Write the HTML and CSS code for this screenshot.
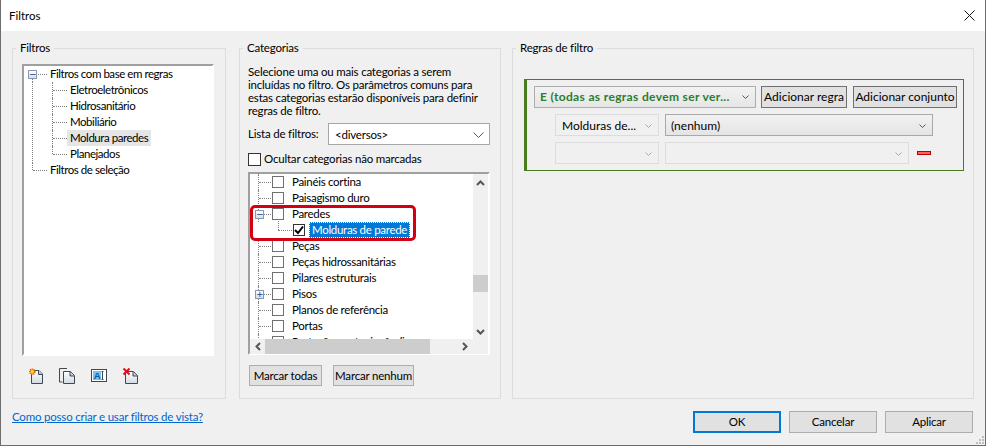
FILE: index.html
```html
<!DOCTYPE html>
<html lang="pt">
<head>
<meta charset="utf-8">
<title>Filtros</title>
<link rel="stylesheet" href="styles.css">
</head>
<body>
<div class="window">
  <header class="titlebar">
    <span>Filtros</span>
    <svg class="close" width="11" height="11" viewBox="0 0 11 11"><path d="M.5.5l10 10M10.500.5l-10 10" stroke="#111" fill="none"/></svg>
  </header>
  <main class="main">
    <fieldset class="group group-filters">
      <legend>Filtros</legend>
      <div class="tree-panel">
        <div class="t-row t-root t-first"><span class="exp">−</span><span class="t-text">Filtros com base em regras</span></div>
        <div class="t-row t-child"><span class="t-text">Eletroeletrônicos</span></div>
        <div class="t-row t-child"><span class="t-text">Hidrosanitário</span></div>
        <div class="t-row t-child"><span class="t-text">Mobiliário</span></div>
        <div class="t-row t-child"><span class="t-text t-sel">Moldura paredes</span></div>
        <div class="t-row t-child t-end"><span class="t-text">Planejados</span></div>
        <div class="t-row t-root t-last"><span class="t-text">Filtros de seleção</span></div>
      </div>
      <div class="tools">
        <svg class="tool" width="18" height="18" viewBox="0 0 18 18"><defs><linearGradient id="pg" x1="0" y1="0" x2="0" y2="1"><stop offset="0" stop-color="#fff"/><stop offset="1" stop-color="#d3dae2"/></linearGradient></defs><path d="M5.500 3.500h7.500l3.500 3.500v9.500h-11z" fill="url(#pg)" stroke="#3d4a55"/><path d="M12.500 3.500v4h4" fill="#c5ccd4" stroke="#3d4a55"/><circle cx="6.300" cy="4.700" r="2.500" fill="#ffd21f" stroke="#f05a00" stroke-width="1.600" stroke-dasharray="1.200 .6"/></svg>
        <svg class="tool" width="18" height="18" viewBox="0 0 18 18"><path d="M9 1.500h-7.500v13.500h3" fill="none" stroke="#3d4a55"/><path d="M5.500 4.500h7l4 4v8h-11z" fill="url(#pg)" stroke="#3d4a55"/><path d="M12 4.500v4.500h4.500" fill="#c5ccd4" stroke="#3d4a55"/></svg>
        <svg class="tool" width="18" height="18" viewBox="0 0 18 18"><rect x="1.500" y="2.500" width="15" height="12" fill="#fff" stroke="#3d4a55"/><rect x="3" y="4" width="8" height="9" fill="#7cc0ee"/><text class="icon-a" x="7" y="12">A</text><path d="M11.500 4.500h2M12.500 4.500v8M11.500 12.500h2" stroke="#3d4a55" fill="none"/></svg>
        <svg class="tool" width="18" height="18" viewBox="0 0 18 18"><path d="M3.500 4.500h8l4 4v8h-12z" fill="url(#pg)" stroke="#3d4a55"/><path d="M11 4.500v4.500h4.500" fill="#c5ccd4" stroke="#3d4a55"/><path d="M1.500 1.500l6 6M7.500 1.500l-6 6" stroke="#d8141c" stroke-width="2" fill="none"/></svg>
      </div>
    </fieldset>

    <fieldset class="group group-cats">
      <legend>Categorias</legend>
      <p class="desc">Selecione uma ou mais categorias a serem incluídas no filtro. Os parâmetros comuns para estas categorias estarão disponíveis para definir regras de filtro.</p>
      <div class="list-filter">
        <span class="lf-label">Lista de filtros:</span>
        <div class="combo combo-white"><span>&lt;diversos&gt;</span>
          <svg width="11" height="6" viewBox="0 0 11 6"><path d="M.5.500l5 5 5-5" fill="none" stroke="#555"/></svg></div>
      </div>
      <label class="hide-row"><span class="bigbox"></span><span>Ocultar categorias não marcadas</span></label>
      <div class="catlist">
        <div class="cat-view">
          <div class="c-row"><span class="cb"></span>Painéis cortina</div>
          <div class="c-row"><span class="cb"></span>Paisagismo duro</div>
          <div class="c-row"><span class="exp exp-c">−</span><span class="cb"></span>Paredes</div>
          <div class="c-row c-sub"><span class="cb cb-on"><svg width="10" height="10" viewBox="0 0 10 10"><path d="M1 5l3 3 5-6.500" fill="none" stroke="#000" stroke-width="2"/></svg></span><span class="c-sel">Molduras de parede</span></div>
          <div class="c-row"><span class="cb"></span>Peças</div>
          <div class="c-row"><span class="cb"></span>Peças hidrossanitárias</div>
          <div class="c-row"><span class="cb"></span>Pilares estruturais</div>
          <div class="c-row"><span class="exp exp-c">+</span><span class="cb"></span>Pisos</div>
          <div class="c-row"><span class="cb"></span>Planos de referência</div>
          <div class="c-row"><span class="cb"></span>Portas</div>
          <div class="c-row"><span class="cb"></span>Proteção contra incêndio</div>
        </div>
        <div class="vbar">
          <svg width="9" height="6" viewBox="0 0 9 6"><path d="M1 5l3.500-3.500 3.500 3.500" fill="none" stroke="#555" stroke-width="2"/></svg>
          <span class="vtrack"><span class="vthumb"></span></span>
          <svg width="9" height="6" viewBox="0 0 9 6"><path d="M1 1l3.500 3.500 3.500-3.500" fill="none" stroke="#555" stroke-width="2"/></svg>
        </div>
        <div class="hbar">
          <svg width="6" height="9" viewBox="0 0 6 9"><path d="M5 1l-3.500 3.500 3.500 3.500" fill="none" stroke="#555" stroke-width="2"/></svg>
          <span class="hthumb"></span>
          <svg width="6" height="9" viewBox="0 0 6 9"><path d="M1 1l3.500 3.500-3.500 3.500" fill="none" stroke="#555" stroke-width="2"/></svg>
        </div>
        <div class="corner"></div>
      </div>
      <div class="mark-row">
        <button class="btn btn-all" type="button">Marcar todas</button>
        <button class="btn btn-none" type="button">Marcar nenhum</button>
      </div>
      <div class="annotation"></div>
    </fieldset>

    <fieldset class="group group-rules">
      <legend>Regras de filtro</legend>
      <div class="rule-panel">
        <div class="rule-head">
          <div class="combo combo-and"><strong>E (todas as regras devem ser ver...</strong>
            <svg width="7" height="5" viewBox="0 0 7 5"><path d="M.5.500l3 3 3-3" fill="none" stroke="#555"/></svg></div>
          <button class="btn btn-dark btn-rule" type="button">Adicionar regra</button>
          <button class="btn btn-dark btn-set" type="button">Adicionar conjunto</button>
        </div>
        <div class="rule-row">
          <div class="combo combo-off combo-field"><span>Molduras de...</span>
            <svg width="7" height="5" viewBox="0 0 7 5"><path d="M.5.500l3 3 3-3" fill="none" stroke="#aaa"/></svg></div>
          <div class="combo combo-on combo-value"><span>(nenhum)</span>
            <svg width="7" height="5" viewBox="0 0 7 5"><path d="M.5.500l3 3 3-3" fill="none" stroke="#555"/></svg></div>
        </div>
        <div class="rule-row">
          <div class="combo combo-off combo-field">
            <svg width="7" height="5" viewBox="0 0 7 5"><path d="M.5.500l3 3 3-3" fill="none" stroke="#aaa"/></svg></div>
          <div class="combo combo-off combo-value2">
            <svg width="7" height="5" viewBox="0 0 7 5"><path d="M.5.500l3 3 3-3" fill="none" stroke="#aaa"/></svg></div>
          <span class="minus"></span>
        </div>
      </div>
    </fieldset>
  </main>
  <footer class="footer">
    <a class="help" href="#">Como posso criar e usar filtros de vista?</a>
    <div class="actions">
      <button class="btn btn-foot btn-ok" type="button">OK</button>
      <button class="btn btn-foot" type="button">Cancelar</button>
      <button class="btn btn-foot" type="button">Aplicar</button>
    </div>
  </footer>
  <svg class="grip" width="9" height="9" viewBox="0 0 9 9"><path d="M7 0h2v2h-2zM4 3h2v2h-2zM7 3h2v2h-2zM1 6h2v2h-2zM4 6h2v2h-2zM7 6h2v2h-2z" fill="#bdbdbd"/></svg>
</div>
</body>
</html>
```
FILE: styles.css
```css
* { box-sizing: border-box; }
html, body { margin: 0; padding: 0; }
body {
  width: 986px; height: 446px; overflow: hidden;
  font: 11.5px/16px Lato, "Liberation Sans", sans-serif;
  letter-spacing: -0.2px;
  color: #000; background: #f0f0f0;
}
.window {
  position: relative; width: 986px; height: 446px;
  display: flex; flex-direction: column;
  background: #f0f0f0;
  border: 1px solid #6d6d6d; border-top: 0;
}
.titlebar {
  height: 31px; flex: none; background: #fff;
  display: flex; align-items: center; justify-content: space-between;
  padding: 0 10px 0 8px; letter-spacing: 0;
}
.main { flex: none; height: 368px; display: flex; padding: 9px 0 0 11px; }
.group {
  margin: 0; padding: 0; height: 359px; min-width: 0;
  border: 1px solid #dcdcdc; position: relative;
}
.group legend { padding: 0 4px; line-height: 16px; }
.group-filters { width: 214px; padding: 8px 0 0 9px; }
.group-filters legend { margin-left: -6px; }
.group-cats { width: 262px; margin-left: 13px; padding: 0 0 0 8px; }
.group-cats legend { margin-left: -5px; }
.group-rules { width: 462px; margin-left: 11px; padding: 23px 0 0 11px; }
.group-rules legend { margin-left: -8px; }

/* filter tree */
.tree-panel {
  width: 192px; height: 292px; background: #fff; letter-spacing: -0.45px;
  border: 2px solid; border-color: #a0a0a0 #fff #fff #a0a0a0;
}
.t-row { position: relative; height: 16px; display: flex; align-items: center; }
.t-row::before { content: ""; position: absolute; top: 8px; border-top: 1px dotted #808080; }
.t-row::after { content: ""; position: absolute; border-left: 1px dotted #808080; }
.t-root { padding-left: 23px; }
.t-root::before { left: 9px; width: 14px; }
.t-first::after { left: 8px; top: 8px; height: 8px; }
.t-last::after { left: 8px; top: 0; height: 8px; }
.t-child { padding-left: 43px; }
.t-child::before { left: 29px; width: 14px; }
.t-child::after { left: 28px; top: 0; height: 16px; }
.t-end::after { height: 8px; }
/* trunk of the root through the child rows */
.t-child { background: repeating-linear-gradient(to bottom, #808080 0 1px, transparent 1px 2px) 8px 0 / 1px 100% no-repeat; }
.t-text { padding: 0 3px; height: 16px; display: flex; align-items: center; white-space: nowrap; }
.t-sel { background: #e5e5e5; }
.exp {
  position: absolute; left: 4px; top: 4px; z-index: 1;
  width: 9px; height: 9px; border: 1px solid #8a9aa8;
  background: linear-gradient(#fff, #d8dde2);
  color: #1c3f94; font: 9px/7px "DejaVu Sans", sans-serif; text-align: center;
}
.tools { display: flex; gap: 14px; margin-top: 11px; padding-left: 4px; }
.icon-a { font: bold 9.5px "Liberation Sans", sans-serif; fill: #0a5aa8; text-anchor: middle; }

/* categories */
.desc { margin: 9px 0 0; width: 240px; line-height: 13px; }
.list-filter { display: flex; align-items: center; margin-top: 6px; height: 22px; }
.lf-label { width: 80px; flex: none; white-space: nowrap; }
.combo {
  display: flex; align-items: center; justify-content: space-between;
  height: 22px; border: 1px solid #adadad; padding: 0 6px; white-space: nowrap;
}
.combo-white { width: 162px; background: #fff; border-color: #a6a6a6; padding: 1px 5px 0 6px; }
.hide-row { display: flex; align-items: center; margin-top: 7px; height: 14px; gap: 3px; }
.bigbox { width: 13px; height: 13px; border: 1px solid #333; background: #fff; flex: none; }
.catlist {
  display: grid; grid-template-columns: 223px 15px; grid-template-rows: 165px 15px;
  width: 242px; height: 183px; margin-top: 6px; background: #fff;
  border: 2px solid; border-color: #a0a0a0 #fff #fff #a0a0a0;
}
.cat-view { overflow: hidden; background: #fff; letter-spacing: -0.3px; }
.c-row { position: relative; height: 16px; display: flex; align-items: center; padding-left: 22px; white-space: nowrap; }
.c-row::before { content: ""; position: absolute; left: 9px; top: 8px; width: 12px; border-top: 1px dotted #808080; }
.c-row::after { content: ""; position: absolute; left: 8px; top: 0; height: 16px; border-left: 1px dotted #808080; }
.cb {
  width: 12px; height: 12px; margin-right: 8px; flex: none;
  border: 1px solid #707070; background: #fff;
  display: flex; align-items: center; justify-content: center;
}
.exp-c { left: 5px; top: 4px; }
.c-sub { padding-left: 43px; }
.c-sub::before { left: 28px; width: 14px; }
.c-sub::after { left: 28px; top: -3px; height: 11px; }
.cb-on { margin-right: 4px; border-color: #333; }
.c-sel {
  background: #0078d7; color: #fff; height: 16px; padding: 0 3px;
  outline: 1px dotted #fff; outline-offset: -1px; display: flex; align-items: center;
}
.vbar, .hbar { background: #f0f0f0; display: flex; align-items: center; justify-content: space-between; }
.vbar { flex-direction: column; padding: 6px 0 4px; }
.vtrack { flex: 1; width: 15px; display: flex; flex-direction: column; padding-top: 89px; }
.vthumb { display: block; height: 17px; background: #cdcdcd; }
.hbar { padding: 0 5px; }
.hthumb { width: 165px; height: 100%; background: #cdcdcd; margin-left: 1px; margin-right: 30px; }
.corner { background: #f0f0f0; }
.mark-row { display: flex; margin-top: 10px; padding-left: 1px; }
.btn {
  font: inherit; letter-spacing: inherit; color: #000; height: 21px; padding: 0;
  background: #e1e1e1; border: 1px solid #adadad; white-space: nowrap;
}
.btn-all { width: 73px; }
.btn-none { width: 81px; margin-left: 11px; }
.annotation {
  position: absolute; left: 10px; top: 149px; width: 166px; height: 36px;
  border: 3px solid #d40012; border-radius: 5px;
}

/* rules */
.rule-panel {
  width: 440px; height: 92px; padding: 6px 0 0 7px;
  border: 1px solid #4a7d1e; border-left-width: 3px;
}
.rule-head { display: flex; height: 22px; }
.combo-and {
  width: 222px; color: #2c7d2c; padding: 0 6px 0 5px;
  background: linear-gradient(#f2f2f2, #e6e6e6);
}
.combo-and strong { font-weight: 700; font-size: 12px; letter-spacing: .35px; }
.btn-dark { height: 22px; border-color: #707070; font-size: 12px; letter-spacing: 0; }
.btn-rule { width: 86px; margin-left: 5px; }
.btn-set { width: 104px; margin-left: 6px; }
.rule-row { display: flex; align-items: center; height: 22px; margin-top: 6px; padding-left: 21px; font-size: 12px; letter-spacing: 0; }
.rule-row .combo { padding-top: 2px; }
.combo-off { border-color: #dcdcdc; background: #f0f0f0; }
.combo-field { width: 104px; }
.combo-field svg:only-child { margin-left: auto; }
.combo-value { width: 268px; margin-left: 6px; padding-left: 5px; }
.combo-value2 { width: 244px; margin-left: 6px; }
.combo-value2 svg { margin-left: auto; }
.combo-on { background: linear-gradient(#f2f2f2, #e4e4e4); border-color: #a8a8a8; }
.minus { width: 14px; height: 4px; margin-left: 8px; background: #ff6262; border: 1px solid #c00000; }

/* footer */
.footer { flex: 1; display: flex; justify-content: space-between; padding: 12px 12px 0 11px; }
.help { color: #0066cc; line-height: 12px; }
.actions { display: flex; gap: 8px; }
.btn-foot { width: 88px; height: 22px; }
.btn-ok { border: 2px solid #0078d7; }
.grip { position: absolute; right: 1px; bottom: 0; }
```
